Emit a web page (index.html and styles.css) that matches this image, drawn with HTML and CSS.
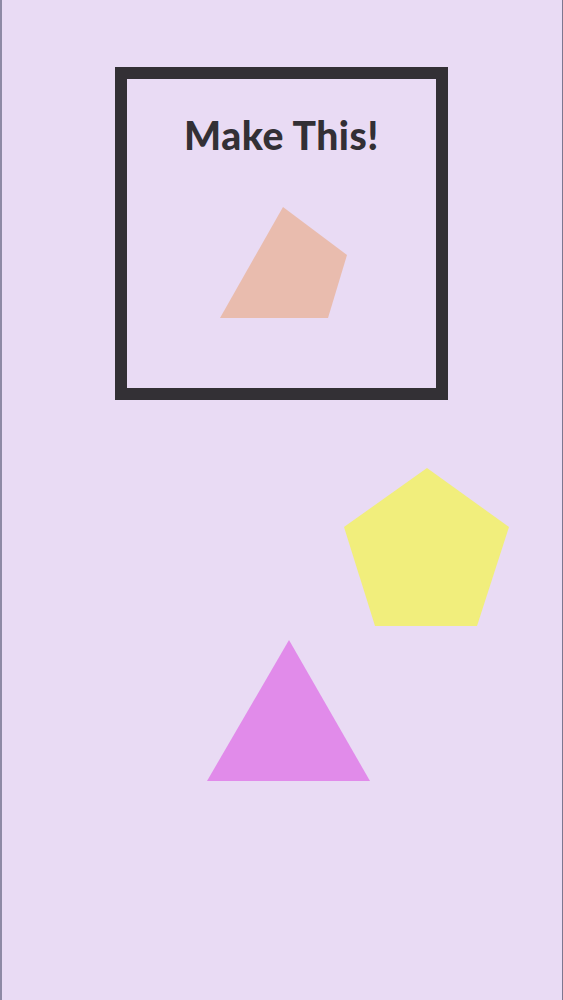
FILE: index.html
```html
<!DOCTYPE html>
<html lang="en">
<head>
    <meta charset="UTF-8">
    <meta name="viewport" content="width=device-width, initial-scale=1.0">
    <title>Make This!</title>
    <link rel="stylesheet" href="styles.css">
</head>
<body>
    <div class="page">
        <div class="target">
            <h1 class="title">Make This!</h1>
            <!-- target shape -->
            <svg class="target-shape" width="309" height="130" viewBox="127 200 309 130">
                <polygon points="283,207 347,255 328,318 220,318" fill="#e9bcae"/>
            </svg>
        </div>
        <!-- loose shapes -->
        <svg class="scene" width="563" height="600" viewBox="0 400 563 600">
            <polygon points="427,468 509,527 477,626 375,626 344,527" fill="#f1ee7c"/>
            <polygon points="289,640 370,781 207,781" fill="#e18bea"/>
        </svg>
    </div>
</body>
</html>
```

FILE: styles.css
```css
html, body {
    margin: 0;
    padding: 0;
}
body {
    background: #e9dbf4;
    font-family: "Lato", "Open Sans", sans-serif;
}
.page {
    min-height: 1000px;
    box-shadow: inset 2px 0 #8e8aa5, inset -1px 0 #7d7790;
    overflow: hidden;
}
.target {
    box-sizing: border-box;
    width: 333px;
    height: 333px;
    margin: 67px 0 0 115px;
    border: 12px solid #333035;
    display: flex;
    flex-direction: column;
}
.title {
    margin: 0;
    height: 121px;
    padding-top: 36px;
    box-sizing: border-box;
    text-align: center;
    font-size: 39px;
    font-weight: 900;
    line-height: 40px;
    color: #333035;
    letter-spacing: 0.5px;
}
.target-shape {
    display: block;
}
.scene {
    display: block;
}
```
